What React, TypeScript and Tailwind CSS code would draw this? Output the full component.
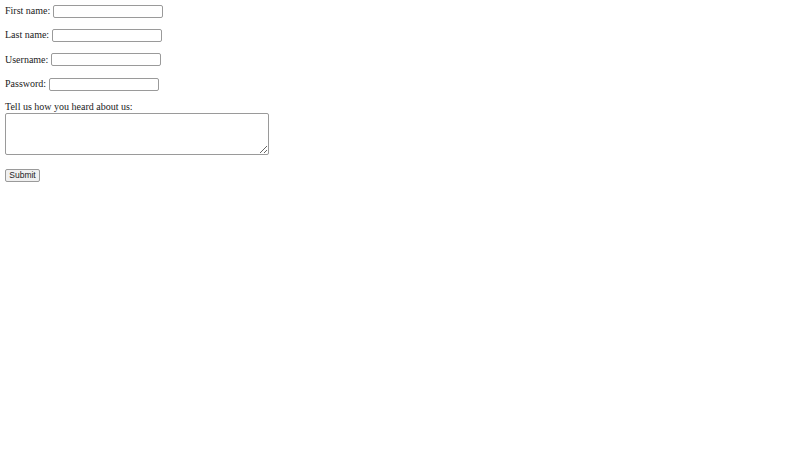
import * as React from "react";

const fields = [
    { label: "First name:", type: "text" },
    { label: "Last name:", type: "text" },
    { label: "Username:", type: "text" },
    { label: "Password:", type: "password" },
];

export default function App() {
    return (
        <div className="min-h-[450px] w-[800px] bg-white px-[5px] pt-[4px] text-[10px] leading-[12px] text-[#222] [font-family:'Liberation_Serif',serif]">
            <form className="flex flex-col" onSubmit={(e) => e.preventDefault()}>
                <div className="flex flex-col gap-[10.4px]">
                    {fields.map((field) => (
                        <label key={field.label} className="flex h-[14px] items-center">
                            <span>{field.label}</span>
                            <input
                                type={field.type}
                                className="ml-[2.5px] h-[13px] w-[110.5px] rounded-[2px] border border-[#9a9a9a] bg-white"
                            />
                        </label>
                    ))}
                </div>
                <label className="mt-[11px] flex flex-col">
                    <span className="h-[10px] leading-[10px]">Tell us how you heard about us:</span>
                    <textarea className="mt-[1px] h-[42px] w-[264px] resize rounded-[2px] border border-[#9a9a9a] bg-white" />
                </label>
                <div className="mt-[14px]">
                    <button
                        type="submit"
                        className="h-[13px] w-[35px] rounded-[2px] border border-[#9a9a9a] bg-[#f0f0f0] text-[8.5px] leading-[11px] text-[#222] [font-family:'Liberation_Sans',sans-serif]"
                    >
                        Submit
                    </button>
                </div>
            </form>
        </div>
    );
}
